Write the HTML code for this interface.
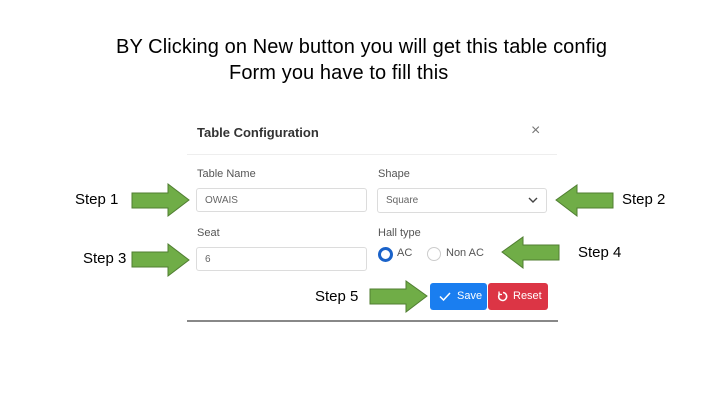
<!DOCTYPE html>
<html><head><style>
body{margin:0;width:704px;height:412px;background:#fff;position:relative;overflow:hidden;font-family:"Liberation Sans",sans-serif}
.a{position:absolute;white-space:nowrap}
.t{font-size:20px;color:#000;letter-spacing:0.1px}
.lbl{font-size:11px;color:#555}
.inp{position:absolute;border:1px solid #dcdcdc;border-radius:3px;background:#fff;font-size:10px;color:#666;box-sizing:border-box;padding-left:8px;line-height:23px}
.step{font-size:15px;color:#000}
</style></head><body>
<div class="a t" style="left:116px;top:36px">BY Clicking on New button you will get this table config</div>
<div class="a t" style="left:229px;top:62px">Form you have to fill this</div>

<div class="a" style="left:197px;top:125px;font-size:13px;font-weight:bold;color:#333">Table Configuration</div>
<div class="a" style="left:531px;top:122px;font-size:16px;color:#777">×</div>
<div class="a" style="left:187px;top:154px;width:370px;height:1px;background:#eee"></div>

<div class="a lbl" style="left:197px;top:168px">Table Name</div>
<div class="inp" style="left:196px;top:188px;width:171px;height:24px">OWAIS</div>
<div class="a lbl" style="left:378px;top:168px">Shape</div>
<div class="inp" style="left:377px;top:188px;width:170px;height:25px">Square
<svg style="position:absolute;right:8px;top:8px" width="10" height="7" viewBox="0 0 10 7"><path d="M1 1l4 4 4-4" fill="none" stroke="#444" stroke-width="1.4"/></svg></div>

<div class="a lbl" style="left:197px;top:227px">Seat</div>
<div class="inp" style="left:196px;top:247px;width:171px;height:24px">6</div>
<div class="a lbl" style="left:378px;top:227px">Hall type</div>
<div class="a" style="left:378px;top:247px;width:9px;height:9px;border:3px solid #1a62c9;border-radius:50%"></div>
<div class="a" style="left:397px;top:247px;font-size:11px;color:#555">AC</div>
<div class="a" style="left:427px;top:247px;width:12px;height:12px;border:1px solid #ccc;border-radius:50%"></div>
<div class="a" style="left:446px;top:247px;font-size:11px;color:#555">Non AC</div>

<div class="a" style="left:430px;top:283px;width:57px;height:27px;background:#1a7ef0;border-radius:3px;color:#fff;font-size:11px;line-height:27px">
<svg style="position:absolute;left:9px;top:9px" width="12" height="9" viewBox="0 0 12 9"><path d="M1 4.5l3.5 3.5L11 1" fill="none" stroke="#fff" stroke-width="1.5"/></svg><span style="position:absolute;left:27px">Save</span></div>
<div class="a" style="left:488px;top:283px;width:60px;height:27px;background:#dc3545;border-radius:3px;color:#fff;font-size:11px;line-height:27px">
<svg style="position:absolute;left:9px;top:8px" width="11" height="11" viewBox="0 0 11 11"><path d="M3 2.5A4 4 0 1 0 6 1.5" fill="none" stroke="#fff" stroke-width="1.5"/><path d="M2 0.5v3h3" fill="none" stroke="#fff" stroke-width="1.3"/></svg><span style="position:absolute;left:25px">Reset</span></div>
<div class="a" style="left:187px;top:320px;width:371px;height:2px;background:#888"></div>

<div class="a step" style="left:75px;top:191px">Step 1</div>
<div class="a step" style="left:83px;top:250px">Step 3</div>
<div class="a step" style="left:622px;top:191px">Step 2</div>
<div class="a step" style="left:578px;top:244px">Step 4</div>
<div class="a step" style="left:315px;top:288px">Step 5</div>

<svg class="a" style="left:0;top:0" width="704" height="412">
<g fill="#70ad47" stroke="#507e32" stroke-width="1">
<polygon points="132,193 168,193 168,184 189,200 168,216 168,208 132,208"/>
<polygon points="132,252 168,252 168,244 189,260 168,276 168,267 132,267"/>
<polygon points="613,193 577,193 577,185 556,200 577,216 577,208 613,208"/>
<polygon points="559,245 523,245 523,237 502,252 523,268 523,260 559,260"/>
<polygon points="370,289 406,289 406,281 427,296 406,312 406,304 370,304"/>
</g></svg>
</body></html>
